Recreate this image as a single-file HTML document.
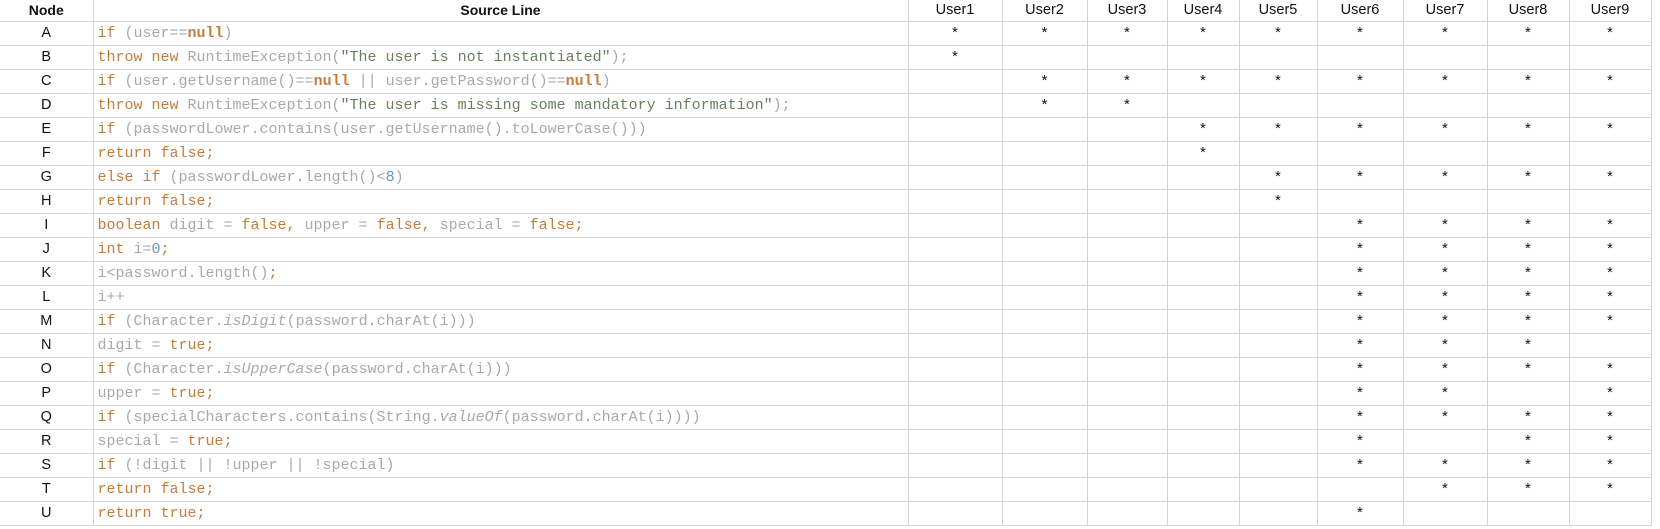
<!DOCTYPE html>
<html><head><meta charset="utf-8"><style>
body{margin:0;background:#fff;width:1660px;height:529px;overflow:hidden}
table{border-collapse:collapse;table-layout:fixed;position:absolute;left:0;top:0}
td{border:1px solid #d4d4d4;height:23px;padding:0;font-family:"Liberation Sans",sans-serif;font-size:14.5px;color:#111;text-align:center;white-space:nowrap;overflow:hidden;line-height:23px}
tr.h td{height:21px;line-height:21px}
tr.h td.b{font-weight:bold;font-size:14px}
tr td:first-child{border-left:none}
tr.h td{border-top:none}
td.c{text-align:left;padding-left:4px;font-family:"Liberation Mono",monospace;font-size:15px;color:#a8a8ad}
.k{color:#c47d3c}.s{color:#6b7f5e}.n{color:#6897bb}.i{font-style:italic}.bn{color:#c47d3c;font-weight:bold}
</style></head><body>
<table>
<colgroup><col style="width:93px"><col style="width:815px"><col style="width:94px"><col style="width:85px"><col style="width:80px"><col style="width:72px"><col style="width:78px"><col style="width:86px"><col style="width:84px"><col style="width:82px"><col style="width:82px"></colgroup>
<tr class="h"><td class="b">Node</td><td class="b">Source Line</td><td>User1</td><td>User2</td><td>User3</td><td>User4</td><td>User5</td><td>User6</td><td>User7</td><td>User8</td><td>User9</td></tr>
<tr><td>A</td><td class="c"><span class="k">if</span> (user==<span class="bn">null</span>)</td><td>*</td><td>*</td><td>*</td><td>*</td><td>*</td><td>*</td><td>*</td><td>*</td><td>*</td></tr>
<tr><td>B</td><td class="c"><span class="k">throw new</span> RuntimeException(<span class="s">"The user is not instantiated"</span>);</td><td>*</td><td></td><td></td><td></td><td></td><td></td><td></td><td></td><td></td></tr>
<tr><td>C</td><td class="c"><span class="k">if</span> (user.getUsername()==<span class="bn">null</span> || user.getPassword()==<span class="bn">null</span>)</td><td></td><td>*</td><td>*</td><td>*</td><td>*</td><td>*</td><td>*</td><td>*</td><td>*</td></tr>
<tr><td>D</td><td class="c"><span class="k">throw new</span> RuntimeException(<span class="s">"The user is missing some mandatory information"</span>);</td><td></td><td>*</td><td>*</td><td></td><td></td><td></td><td></td><td></td><td></td></tr>
<tr><td>E</td><td class="c"><span class="k">if</span> (passwordLower.contains(user.getUsername().toLowerCase()))</td><td></td><td></td><td></td><td>*</td><td>*</td><td>*</td><td>*</td><td>*</td><td>*</td></tr>
<tr><td>F</td><td class="c"><span class="k">return false;</span></td><td></td><td></td><td></td><td>*</td><td></td><td></td><td></td><td></td><td></td></tr>
<tr><td>G</td><td class="c"><span class="k">else if</span> (passwordLower.length()&lt;<span class="n">8</span>)</td><td></td><td></td><td></td><td></td><td>*</td><td>*</td><td>*</td><td>*</td><td>*</td></tr>
<tr><td>H</td><td class="c"><span class="k">return false;</span></td><td></td><td></td><td></td><td></td><td>*</td><td></td><td></td><td></td><td></td></tr>
<tr><td>I</td><td class="c"><span class="k">boolean</span> digit = <span class="k">false,</span> upper = <span class="k">false,</span> special = <span class="k">false;</span></td><td></td><td></td><td></td><td></td><td></td><td>*</td><td>*</td><td>*</td><td>*</td></tr>
<tr><td>J</td><td class="c"><span class="k">int</span> i=<span class="n">0</span><span class="k">;</span></td><td></td><td></td><td></td><td></td><td></td><td>*</td><td>*</td><td>*</td><td>*</td></tr>
<tr><td>K</td><td class="c">i&lt;password.length()<span class="k">;</span></td><td></td><td></td><td></td><td></td><td></td><td>*</td><td>*</td><td>*</td><td>*</td></tr>
<tr><td>L</td><td class="c">i++</td><td></td><td></td><td></td><td></td><td></td><td>*</td><td>*</td><td>*</td><td>*</td></tr>
<tr><td>M</td><td class="c"><span class="k">if</span> (Character.<span class="i">isDigit</span>(password.charAt(i)))</td><td></td><td></td><td></td><td></td><td></td><td>*</td><td>*</td><td>*</td><td>*</td></tr>
<tr><td>N</td><td class="c">digit = <span class="k">true;</span></td><td></td><td></td><td></td><td></td><td></td><td>*</td><td>*</td><td>*</td><td></td></tr>
<tr><td>O</td><td class="c"><span class="k">if</span> (Character.<span class="i">isUpperCase</span>(password.charAt(i)))</td><td></td><td></td><td></td><td></td><td></td><td>*</td><td>*</td><td>*</td><td>*</td></tr>
<tr><td>P</td><td class="c">upper = <span class="k">true;</span></td><td></td><td></td><td></td><td></td><td></td><td>*</td><td>*</td><td></td><td>*</td></tr>
<tr><td>Q</td><td class="c"><span class="k">if</span> (specialCharacters.contains(String.<span class="i">valueOf</span>(password.charAt(i))))</td><td></td><td></td><td></td><td></td><td></td><td>*</td><td>*</td><td>*</td><td>*</td></tr>
<tr><td>R</td><td class="c">special = <span class="k">true;</span></td><td></td><td></td><td></td><td></td><td></td><td>*</td><td></td><td>*</td><td>*</td></tr>
<tr><td>S</td><td class="c"><span class="k">if</span> (!digit || !upper || !special)</td><td></td><td></td><td></td><td></td><td></td><td>*</td><td>*</td><td>*</td><td>*</td></tr>
<tr><td>T</td><td class="c"><span class="k">return false;</span></td><td></td><td></td><td></td><td></td><td></td><td></td><td>*</td><td>*</td><td>*</td></tr>
<tr><td>U</td><td class="c"><span class="k">return true;</span></td><td></td><td></td><td></td><td></td><td></td><td>*</td><td></td><td></td><td></td></tr>
</table>
</body></html>
